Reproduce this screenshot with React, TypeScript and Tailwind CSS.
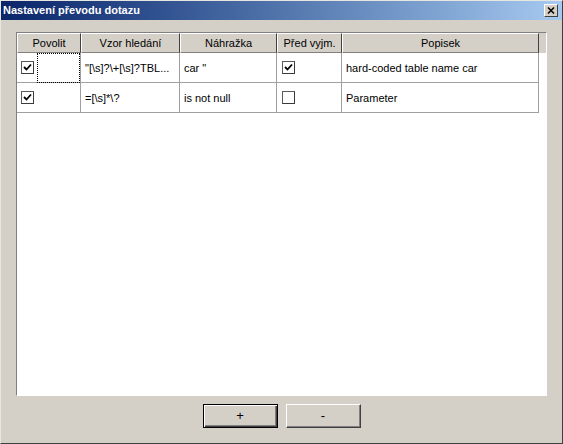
import type { ReactNode } from "react";

const COLS = "grid-cols-[64px_99px_97px_65px_197px]";

const rows = [
  { enabled: true, pattern: '"[\\s]?\\+[\\s]?TBL...', replace: 'car "', before: true, label: "hard-coded table name car" },
  { enabled: true, pattern: "=[\\s]*\\?", replace: "is not null", before: false, label: "Parameter" },
];

function CheckBox({ checked }: { checked: boolean }) {
  return (
    <span className="flex h-[13px] w-[13px] items-center justify-center border border-t-[#5a5a5a] border-l-[#5a5a5a] border-r-[#3a3a3a] border-b-[#3a3a3a] bg-white">
      {checked && (
        <svg width="9" height="9" viewBox="0 0 9 9">
          <path d="M1 4 L3.5 6.5 L8 1.5" stroke="#000" strokeWidth="1.8" fill="none" />
        </svg>
      )}
    </span>
  );
}

function HeaderCell({ children }: { children: ReactNode }) {
  return (
    <div className="flex h-[20px] items-center justify-center border-t border-l border-t-white border-l-white border-r border-b border-r-[#404040] border-b-[#808080] bg-[#d4d0c8] text-[11px] text-black">
      {children}
    </div>
  );
}

function Cell({ children, className = "" }: { children?: ReactNode; className?: string }) {
  return (
    <div className={`flex h-[30px] items-center border-r border-b border-[#a0a0a0] bg-white px-[4px] pt-[2px] text-[11px] text-black ${className}`}>
      {children}
    </div>
  );
}

function Button({ children, isDefault }: { children: ReactNode; isDefault?: boolean }) {
  return (
    <button
      className={`flex h-[24px] w-[75px] items-center justify-center bg-[#d4d0c8] text-[13px] text-black ${
        isDefault
          ? "border border-black shadow-[inset_1px_1px_0_#fff,inset_-1px_-1px_0_#404040,inset_-2px_-2px_0_#808080]"
          : "border border-t-white border-l-white border-r-[#404040] border-b-[#404040] shadow-[inset_-1px_-1px_0_#808080]"
      }`}
    >
      {children}
    </button>
  );
}

export default function App() {
  return (
    <div
      className="flex h-[444px] w-[563px] flex-col border border-t-[#e8e6e0] border-l-[#e8e6e0] border-r-[#404040] border-b-[#404040] bg-[#d4d0c8]"
      style={{ fontFamily: '"Liberation Sans", Arial, sans-serif' }}
    >
      <div className="flex h-[19px] items-center justify-between bg-gradient-to-r from-[#0a246a] to-[#a6caf0] pl-[2px] pr-[4px]">
        <span className="text-[11px] font-bold text-white">Nastavení převodu dotazu</span>
        <span className="flex h-[13px] w-[14px] items-center justify-center border border-t-white border-l-white border-r-[#404040] border-b-[#404040] bg-[#d4d0c8]">
          <svg width="8" height="7" viewBox="0 0 8 7">
            <path d="M1 0.5 L7 6.5 M7 0.5 L1 6.5" stroke="#000" strokeWidth="1.5" />
          </svg>
        </span>
      </div>

      <div className="mt-[12px] ml-[15px] flex h-[364px] w-[531px] flex-col border border-t-[#808080] border-l-[#808080] border-r-white border-b-white bg-white">
        <div className="flex bg-[#d4d0c8]">
          <div className={`grid ${COLS}`}>
            <HeaderCell>Povolit</HeaderCell>
            <HeaderCell>Vzor hledání</HeaderCell>
            <HeaderCell>Náhražka</HeaderCell>
            <HeaderCell>Před vyjm.</HeaderCell>
            <HeaderCell>Popisek</HeaderCell>
          </div>
        </div>
        <div className={`grid ${COLS}`}>
          {rows.map((r, i) => (
            <div key={i} className="contents">
              <Cell className="gap-[3px] !px-0 !pt-0">
                <span className="pl-[4px]">
                  <CheckBox checked={r.enabled} />
                </span>
                {i === 0 && <span className="h-[30px] flex-1 border border-dotted border-black" />}
              </Cell>
              <Cell className="whitespace-nowrap">{r.pattern}</Cell>
              <Cell>{r.replace}</Cell>
              <Cell className="pl-[5px] !pt-0">
                <CheckBox checked={r.before} />
              </Cell>
              <Cell>{r.label}</Cell>
            </div>
          ))}
        </div>
      </div>

      <div className="mt-[8px] flex justify-center gap-[8px]">
        <Button isDefault>+</Button>
        <Button>-</Button>
      </div>
    </div>
  );
}
